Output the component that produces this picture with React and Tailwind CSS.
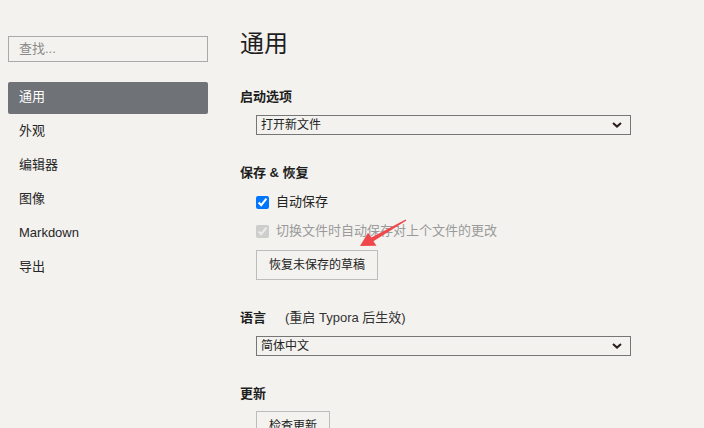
import React from "react";

const font = { fontFamily: '"Liberation Sans", "Noto Sans CJK SC", sans-serif' };

const navItems = ["通用", "外观", "编辑器", "图像", "Markdown", "导出"];

const Select = ({ value }) => (
  <div className="relative ml-4 w-[375px] h-[20px] border border-[#767676] bg-[#f3f2ef]">
    <div className="pl-[4px] text-[12px] leading-[18px] text-[#222]">{value}</div>
    <svg className="absolute right-[8px] top-[6px]" width="10" height="6" viewBox="0 0 10 6">
      <path d="M1 1 L5 4.6 L9 1" fill="none" stroke="#2a1e1e" strokeWidth="2" />
    </svg>
  </div>
);

const Heading = ({ children, className = "" }) => (
  <div className={"text-[13px] leading-[20px] font-bold text-[#1e1e1e] " + className}>{children}</div>
);

const Button = ({ children, className = "" }) => (
  <button className={"ml-4 h-[30px] px-3 border border-[#bcbcbc] bg-[#f3f2ef] text-[12px] text-[#222] " + className}>
    {children}
  </button>
);

export default function App() {
  return (
    <div style={font} className="relative flex h-[428px] w-full overflow-hidden bg-[#f3f2ef]">
      {/* sidebar */}
      <aside className="w-[216px] shrink-0 px-2 pt-9">
        <div className="h-[26px] border border-[#a9a9a9] pl-[10px] text-[13px] leading-[24px] text-[#8a8a8a]">
          查找...
        </div>
        <nav className="mt-5 flex flex-col gap-[2px]">
          {navItems.map((item, i) => (
            <div
              key={item}
              className={
                i === 0
                  ? "h-8 rounded-[2px] bg-[#6f7377] px-[11px] text-[13px] leading-[30px] text-white"
                  : "h-8 px-[11px] text-[13px] leading-[30px] text-[#262626]"
              }
            >
              {item}
            </div>
          ))}
        </nav>
      </aside>

      {/* main */}
      <main className="flex-1 pl-6 pt-[28px]">
        <h1 className="text-[24px] leading-[32px] text-[#1e1e1e]">通用</h1>

        <Heading className="mt-[27px]">启动选项</Heading>
        <div className="mt-2">
          <Select value="打开新文件" />
        </div>

        <Heading className="mt-[28px]">保存 &amp; 恢复</Heading>
        <label className="ml-4 mt-[9px] flex h-[20px] items-center gap-[7px] text-[13px] text-[#222]">
          <input type="checkbox" defaultChecked className="m-0 h-[13px] w-[13px] accent-[#0075ff]" />
          自动保存
        </label>
        <label className="ml-4 mt-[9px] flex h-[20px] items-center gap-[7px] text-[13px] text-[#9a9a9a]">
          <input type="checkbox" defaultChecked disabled className="m-0 h-[13px] w-[13px]" />
          切换文件时自动保存对上个文件的更改
        </label>
        <Button className="mt-[9px]">恢复未保存的草稿</Button>

        <Heading className="mt-[28px]">
          语言
          <span className="ml-[19px] font-normal text-[#333]">(重启 Typora 后生效)</span>
        </Heading>
        <div className="mt-2">
          <Select value="简体中文" />
        </div>

        <Heading className="mt-[28px]">更新</Heading>
        <Button className="mt-[7px]">检查更新</Button>
      </main>

      {/* annotation arrow */}
      <svg className="pointer-events-none absolute left-0 top-0" width="704" height="428">
        <polygon
          points="360,246 376.5,245.8 373.4,241.2 406.4,220.6 405.6,219.4 371.4,237.6 368,232.8"
          fill="#f0484a"
        />
      </svg>
    </div>
  );
}
